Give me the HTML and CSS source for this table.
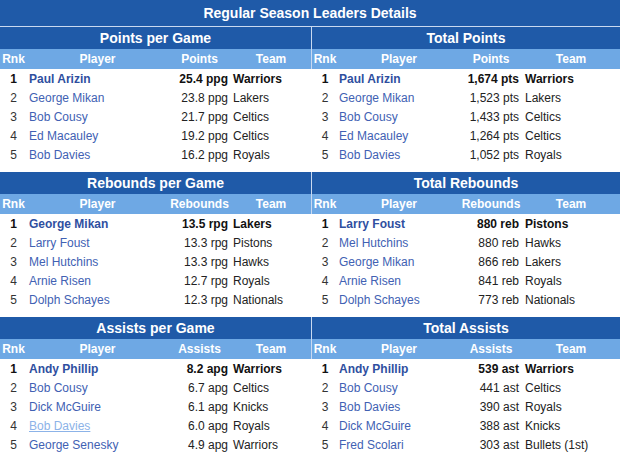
FILE: index.html
```html
<!DOCTYPE html>
<html>
<head>
<meta charset="utf-8">
<link rel="stylesheet" href="styles.css">
</head>
<body>
<div class="board">
  <div class="title">Regular Season Leaders Details</div>
  <div class="grid">
    <section class="panel left">
      <div class="band head">Points per Game</div>
      <div class="row sub"><span>Rnk</span><span>Player</span><span>Points</span><span>Team</span></div>
      <div class="row top"><span class="rk">1</span><a class="pl">Paul Arizin</a><span class="val">25.4 ppg</span><span class="tm">Warriors</span></div>
      <div class="row"><span class="rk">2</span><a class="pl">George Mikan</a><span class="val">23.8 ppg</span><span class="tm">Lakers</span></div>
      <div class="row"><span class="rk">3</span><a class="pl">Bob Cousy</a><span class="val">21.7 ppg</span><span class="tm">Celtics</span></div>
      <div class="row"><span class="rk">4</span><a class="pl">Ed Macauley</a><span class="val">19.2 ppg</span><span class="tm">Celtics</span></div>
      <div class="row"><span class="rk">5</span><a class="pl">Bob Davies</a><span class="val">16.2 ppg</span><span class="tm">Royals</span></div>
    </section>
    <section class="panel right">
      <div class="band head">Total Points</div>
      <div class="row sub"><span>Rnk</span><span>Player</span><span>Points</span><span>Team</span></div>
      <div class="row top"><span class="rk">1</span><a class="pl">Paul Arizin</a><span class="val">1,674 pts</span><span class="tm">Warriors</span></div>
      <div class="row"><span class="rk">2</span><a class="pl">George Mikan</a><span class="val">1,523 pts</span><span class="tm">Lakers</span></div>
      <div class="row"><span class="rk">3</span><a class="pl">Bob Cousy</a><span class="val">1,433 pts</span><span class="tm">Celtics</span></div>
      <div class="row"><span class="rk">4</span><a class="pl">Ed Macauley</a><span class="val">1,264 pts</span><span class="tm">Celtics</span></div>
      <div class="row"><span class="rk">5</span><a class="pl">Bob Davies</a><span class="val">1,052 pts</span><span class="tm">Royals</span></div>
    </section>

    <section class="panel left">
      <div class="band head">Rebounds per Game</div>
      <div class="row sub"><span>Rnk</span><span>Player</span><span>Rebounds</span><span>Team</span></div>
      <div class="row top"><span class="rk">1</span><a class="pl">George Mikan</a><span class="val">13.5 rpg</span><span class="tm">Lakers</span></div>
      <div class="row"><span class="rk">2</span><a class="pl">Larry Foust</a><span class="val">13.3 rpg</span><span class="tm">Pistons</span></div>
      <div class="row"><span class="rk">3</span><a class="pl">Mel Hutchins</a><span class="val">13.3 rpg</span><span class="tm">Hawks</span></div>
      <div class="row"><span class="rk">4</span><a class="pl">Arnie Risen</a><span class="val">12.7 rpg</span><span class="tm">Royals</span></div>
      <div class="row"><span class="rk">5</span><a class="pl">Dolph Schayes</a><span class="val">12.3 rpg</span><span class="tm">Nationals</span></div>
    </section>
    <section class="panel right">
      <div class="band head">Total Rebounds</div>
      <div class="row sub"><span>Rnk</span><span>Player</span><span>Rebounds</span><span>Team</span></div>
      <div class="row top"><span class="rk">1</span><a class="pl">Larry Foust</a><span class="val">880 reb</span><span class="tm">Pistons</span></div>
      <div class="row"><span class="rk">2</span><a class="pl">Mel Hutchins</a><span class="val">880 reb</span><span class="tm">Hawks</span></div>
      <div class="row"><span class="rk">3</span><a class="pl">George Mikan</a><span class="val">866 reb</span><span class="tm">Lakers</span></div>
      <div class="row"><span class="rk">4</span><a class="pl">Arnie Risen</a><span class="val">841 reb</span><span class="tm">Royals</span></div>
      <div class="row"><span class="rk">5</span><a class="pl">Dolph Schayes</a><span class="val">773 reb</span><span class="tm">Nationals</span></div>
    </section>

    <section class="panel left">
      <div class="band head">Assists per Game</div>
      <div class="row sub"><span>Rnk</span><span>Player</span><span>Assists</span><span>Team</span></div>
      <div class="row top"><span class="rk">1</span><a class="pl">Andy Phillip</a><span class="val">8.2 apg</span><span class="tm">Warriors</span></div>
      <div class="row"><span class="rk">2</span><a class="pl">Bob Cousy</a><span class="val">6.7 apg</span><span class="tm">Celtics</span></div>
      <div class="row"><span class="rk">3</span><a class="pl">Dick McGuire</a><span class="val">6.1 apg</span><span class="tm">Knicks</span></div>
      <div class="row"><span class="rk">4</span><a class="pl hover">Bob Davies</a><span class="val">6.0 apg</span><span class="tm">Royals</span></div>
      <div class="row"><span class="rk">5</span><a class="pl">George Senesky</a><span class="val">4.9 apg</span><span class="tm">Warriors</span></div>
    </section>
    <section class="panel right">
      <div class="band head">Total Assists</div>
      <div class="row sub"><span>Rnk</span><span>Player</span><span>Assists</span><span>Team</span></div>
      <div class="row top"><span class="rk">1</span><a class="pl">Andy Phillip</a><span class="val">539 ast</span><span class="tm">Warriors</span></div>
      <div class="row"><span class="rk">2</span><a class="pl">Bob Cousy</a><span class="val">441 ast</span><span class="tm">Celtics</span></div>
      <div class="row"><span class="rk">3</span><a class="pl">Bob Davies</a><span class="val">390 ast</span><span class="tm">Royals</span></div>
      <div class="row"><span class="rk">4</span><a class="pl">Dick McGuire</a><span class="val">388 ast</span><span class="tm">Knicks</span></div>
      <div class="row"><span class="rk">5</span><a class="pl">Fred Scolari</a><span class="val">303 ast</span><span class="tm">Bullets (1st)</span></div>
    </section>
  </div>
</div>
</body>
</html>
```

FILE: styles.css
```css
* { box-sizing: border-box; margin: 0; padding: 0; }

body {
  background: #ffffff;
  font-family: "Liberation Sans", Arial, sans-serif;
  font-size: 12px;
  color: #222;
}

.board {
  width: 620px;
}

.title {
  height: 27px;
  line-height: 26px;
  background: #1f5aa8;
  border-bottom: 1px solid #c9d9f0;
  color: #fff;
  font-weight: bold;
  font-size: 14px;
  text-align: center;
}

.grid {
  display: grid;
  grid-template-columns: 311px 309px;
  row-gap: 8px;
}

.panel {
  display: flex;
  flex-direction: column;
}

.head {
  height: 22px;
  line-height: 22px;
  background: #1f5aa8;
  color: #fff;
  font-weight: bold;
  font-size: 14px;
  text-align: center;
}

.row {
  display: grid;
  height: 19px;
  line-height: 20px;
}

.left .row { grid-template-columns: 27px 141px 63px 80px; }
.right .row { grid-template-columns: 26px 122px 62px 98px; margin-left: 1px; }

.right .head { border-left: 1px solid #c9d9f0; }
.right .sub { margin-left: 0; border-left: 1px solid #c9d9f0; }

.sub {
  height: 20px;
  line-height: 20px;
  background: #6ea8e4;
  color: #fff;
  font-weight: bold;
  text-align: center;
}

.rk { text-align: center; color: #333; }
.pl { padding-left: 2px; color: #4161b3; text-decoration: none; white-space: nowrap; }
.right .pl { padding-left: 1px; }
.val { text-align: right; padding-right: 3px; white-space: nowrap; }
.tm { padding-left: 2px; white-space: nowrap; }
.right .tm { padding-left: 3px; }

.top { font-weight: bold; }
.top .rk { color: #111; }
.top .pl { color: #2f4f9f; }
.top .val, .top .tm { color: #111; }

.pl.hover { color: #8cb3e8; text-decoration: underline; }
```
